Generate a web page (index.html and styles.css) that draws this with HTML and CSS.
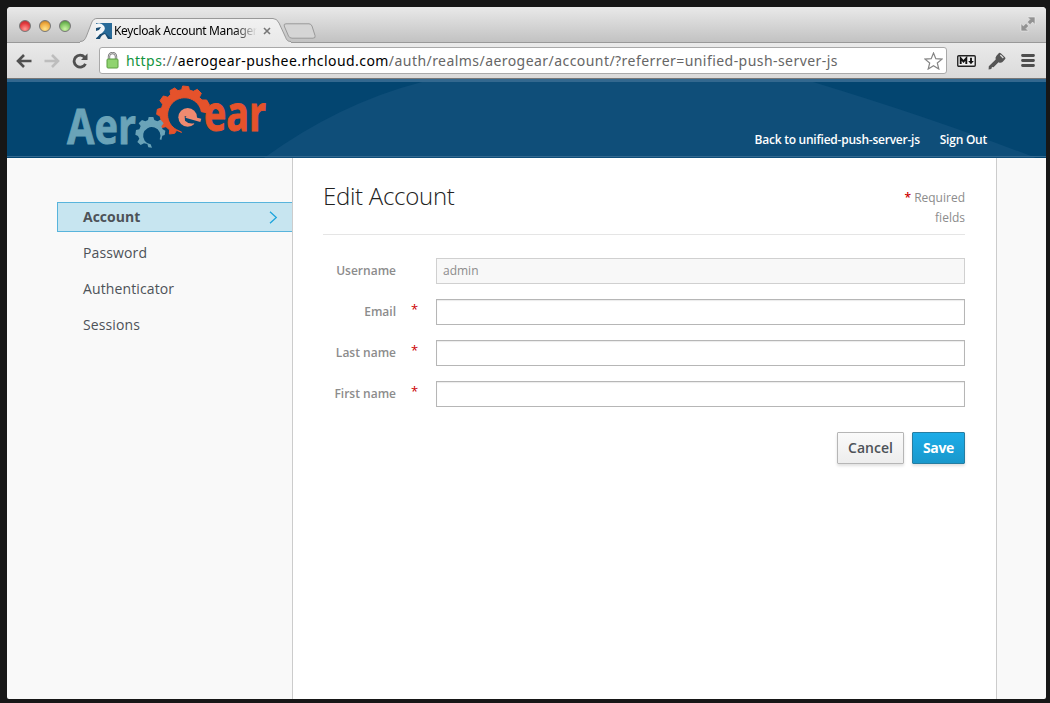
FILE: index.html
```
<!DOCTYPE html>
<html lang="en">
<head>
<meta charset="utf-8">
<title>Keycloak Account Management</title>
<link rel="stylesheet" href="styles.css">
</head>
<body>
<div class="window">
  <div class="tabbar">
    <div class="lights"><i class="light red"></i><i class="light amber"></i><i class="light green"></i></div>
    <div class="tab">
      <svg class="tab-shape" width="238" height="25" viewBox="0 0 238 25"><defs><linearGradient id="tg" x2="0" y2="1"><stop stop-color="#f1f1f1"/><stop offset="1" stop-color="#e9e9e9"/></linearGradient></defs><path d="M0 25V23.500C4 23.500 5 21.500 6.500 18L11.500 5Q13 .5 17 .5H193Q197 .5 199 5L205 18C206.500 21.500 207 23.500 211 23.500V25Z" fill="url(#tg)"/><path d="M0 23.500C4 23.500 5 21.500 6.500 18L11.500 5Q13 .5 17 .5H193Q197 .5 199 5L205 18C206.500 21.500 207 23.500 211 23.500" fill="none" stroke="#999"/></svg>
      <svg class="favicon" width="16" height="16" viewBox="0 0 16 16"><path d="M0 0H16V16H0Z" fill="#286a98"/><path d="M0 1Q5-1 8 3Q10 6 7 9L3 13L0 15Z" fill="#f4f7f9"/><path d="M0 5L5 4L3 7L0 8ZM0 16L4 11L9 10L16 16Z" fill="#1b4d73"/><path d="M4 16Q5 12 9 11L12 16Z" fill="#eee"/></svg>
      <span class="tab-title">Keycloak Account Manager</span>
      <svg class="close" width="8" height="8" viewBox="0 0 8 8"><path d="M1 1L7 7M7 1L1 7" stroke="#777" stroke-width="1.600"/></svg>
    </div>
    <svg class="newtab" width="34" height="17" viewBox="0 0 34 17"><path d="M3 .8H26Q28 .8 29 3L32 12.500Q33 15.200 30 15.200H9Q6.500 15.200 5.500 13L1.200 3Q.5.8 3 .8Z" fill="#d5d5d5" stroke="#999"/></svg>
    <svg class="expand" width="16" height="16" viewBox="0 0 16 16"><path d="M7.500 1H15V8.500L12.600 6.100L10 8.700L7.300 6L9.900 3.400ZM1 7.500L3.400 9.900L6 7.300L8.700 10L6.100 12.600L8.500 15H1Z" fill="#929292" stroke="#eee" stroke-width=".6"/></svg>
  </div>
  <div class="toolbar">
    <svg class="nav" width="16" height="14" viewBox="0 0 16 14"><path d="M15.500 7H2M8 1L2 7L8 13" fill="none" stroke="#505050" stroke-width="2.600"/></svg>
    <svg class="nav" width="16" height="14" viewBox="0 0 16 14"><path d="M.5 7H14M8 1L14 7L8 13" fill="none" stroke="#bdbdbd" stroke-width="2.600"/></svg>
    <svg class="reload" width="16" height="16" viewBox="0 0 16 16"><path d="M13.500 10.800A6 6 0 1 1 12.600 4.200" fill="none" stroke="#505050" stroke-width="2.800"/><path d="M15.500 .5V7H9Z" fill="#505050"/></svg>
    <div class="omnibox">
      <svg class="lock" width="13" height="17" viewBox="0 0 13 17"><path d="M3 8V4.500a3.500 3.500 0 0 1 7 0V8" fill="none" stroke="#777" stroke-width="2.400"/><path d="M3 8V4.500a3.500 3.500 0 0 1 7 0V8" fill="none" stroke="#ddd" stroke-width=".8"/><rect x="1" y="7" width="11" height="9" rx="1" fill="#8fd36f" stroke="#5a9e40"/></svg>
      <span class="url"><span class="scheme">https</span>://<span class="host">aerogear-pushee.rhcloud.com</span>/auth/realms/aerogear/account/?referrer=unified-push-server-js</span>
      <svg class="star" width="19" height="18" viewBox="0 0 19 18"><path d="M9.500 1L11.800 6.700L18 7.100L13.300 11L14.800 17L9.500 13.700L4.200 17L5.700 11L1 7.100L7.200 6.700Z" fill="#fff" stroke="#858585" stroke-width="1.200"/></svg>
    </div>
    <svg class="md" width="19" height="12" viewBox="0 0 19 12"><rect x=".75" y=".75" width="17.500" height="10.500" rx="1" fill="#eee" stroke="#222" stroke-width="1.400"/><path d="M3.700 9V3.300L6.500 6.500L9.300 3.300V9M14 2.800V7" fill="none" stroke="#111" stroke-width="1.900"/><path d="M11.200 6H16.800L14 9.300Z" fill="#111"/></svg>
    <svg class="key" width="18" height="18" viewBox="0 0 18 18"><path d="M10.500 1.500Q11.500 .3 12.800 1.200L17 5.200Q18 6.200 17 7.300L14.500 10Q12.800 11.500 10.500 10.300L5.500 15.300L4 15L3.300 17L.6 17.400L.8 14.300L7.700 7.500Q7 5.300 8.500 3.700Z" fill="#555"/><path d="M12.300 3L15.300 6" stroke="#ddd" stroke-width="1.200"/></svg>
    <svg class="menu" width="14" height="13" viewBox="0 0 14 13"><path d="M1.500 1.500H12.500M1.500 6.500H12.500M1.500 11.500H12.500" stroke="#4e4e4e" stroke-width="2.800" stroke-linecap="round"/></svg>
  </div>
  <header class="header">
    <svg class="swoosh" width="1039" height="79" viewBox="7 79 1039 79"><path d="M264 158Q340 103 422 82L445 79H802L813 82Q935 119 1036 158Z" fill="#0f4e79"/></svg>
    <svg class="logo" width="206" height="70" viewBox="64 82 206 70">
      <text class="wordmark" x="67" y="144" textLength="69" lengthAdjust="spacingAndGlyphs" fill="#6aa3b8" stroke="#6aa3b8">Aer</text>
      <text class="wordmark" x="204" y="130.500" textLength="62" lengthAdjust="spacingAndGlyphs" fill="#e5522b" stroke="#e5522b">ear</text>
      <g transform="translate(130 80) scale(.33333)">
        <path d="M155 157L140 151L134 160L118 162L119 150L108 140L92 143L85 128L93 118L90 108L80 103L82 88L95 84L98 73L90 62L100 48L114 52L122 43L120 32L134 24L144 32L155 29L158 18L176 20L178 30L190 34L202 28L214 40L208 52L216 60L230 60L238 74L230 98L214 95A51 51 0 1 0 146 152Z" fill="#e5522b" stroke="#e5522b" stroke-width="3" stroke-linejoin="round"/>
        <circle cx="173" cy="112" r="28" fill="#f08a70"/>
        <path d="M164 108L216 124L202 146L192 130Q176 133 165 122Z" fill="#034570"/>
        <path d="M172 106L214 116L211 126L166 113Z" fill="#f08a70"/>
        <path d="M66 203L55 202L52 192L42 190L32 195L22 186L28 176L24 168L16 164L18 150L28 148L32 138L26 130L36 120L46 124L54 120L56 111L70 111L73 120L82 124L92 119L101 130L94 139L98 148L106 152L104 165L97 167L94 180L89 178A26 26 0 1 0 62 193Z" fill="#6aa3b8"/>
      </g>
    </svg>
    <nav class="links"><a>Back to unified-push-server-js</a><a>Sign Out</a></nav>
  </header>
  <div class="body">
    <aside class="side">
      <a class="item active">Account<svg width="9" height="13" viewBox="0 0 9 13"><path d="M1 .7L7.300 6.500L1 12.300" fill="none" stroke="#1ca4dc" stroke-width="1.300"/></svg></a>
      <a class="item">Password</a><a class="item">Authenticator</a><a class="item">Sessions</a>
    </aside>
    <main class="main">
      <div class="heading"><h1>Edit Account</h1><p><b>*</b> Required<br>fields</p></div>
      <form>
        <div class="row"><label>Username</label><span class="req"></span><div class="field disabled">admin</div></div>
        <div class="row"><label>Email</label><span class="req">*</span><div class="field"></div></div>
        <div class="row"><label>Last name</label><span class="req">*</span><div class="field"></div></div>
        <div class="row"><label>First name</label><span class="req">*</span><div class="field"></div></div>
        <div class="actions"><button type="button" class="btn">Cancel</button><button type="button" class="btn primary">Save</button></div>
      </form>
    </main>
  </div>
</div>
</body>
</html>
```
FILE: styles.css
```
* { box-sizing: border-box; }
body { margin: 0; height: 703px; padding: 7px 4px 4px 7px; background: #171717; overflow: hidden; font-family: "Open Sans", sans-serif; }
.window { width: 1039px; height: 692px; border-radius: 4px 4px 2px 2px; overflow: hidden; background: #f9f9f9; display: flex; flex-direction: column; }
svg { flex: none; display: block; }
.tabbar { height: 36px; flex: none; background: linear-gradient(#e9e9e9, #c2c2c2); border-bottom: 1px solid #999; display: flex; position: relative; }
.lights { display: flex; gap: 8px; padding: 13px 0 0 12px; width: 73px; }
.light { width: 12px; height: 12px; border-radius: 50%; border: 1px solid #777; }
.red { background: radial-gradient(circle at 50% 80%, #ff9a94, #e3383d 60%, #a82b2f); }
.amber { background: radial-gradient(circle at 50% 80%, #ffe58c, #efa83d 60%, #a86d20); }
.green { background: radial-gradient(circle at 50% 80%, #ccf5a5, #79bf5c 60%, #40802f); }
.tab { width: 203px; margin-top: 11px; position: relative; display: flex; padding: 5px 0 0 16px; z-index: 1; height: 25px; }
.tab-shape { position: absolute; left: 0; top: 0; }
.favicon, .tab-title, .close { position: relative; }
.tab-title { font: 12px/16px "Noto Sans", sans-serif; letter-spacing: -.36px; white-space: nowrap; width: 143px; margin: 0 0 0 2px; color: #000; -webkit-mask-image: linear-gradient(90deg, #000 84%, transparent); mask-image: linear-gradient(90deg, #000 84%, transparent); }
.close { margin: 4px 0 0 6px; flex: none; }
.newtab { margin: 16px 0 0 0; }
.expand { margin: 9px 10px 0 auto; }
.toolbar { height: 36px; flex: none; background: linear-gradient(#eaeaea, #dadada); border-bottom: 1px solid #777; display: flex; align-items: center; padding-left: 9px; }
.nav { margin-right: 12px; }
.reload { margin-right: 11px; }
.omnibox { width: 848px; height: 27px; border: 1px solid #a9a9a9; border-radius: 3px; background: #fff; display: flex; align-items: center; padding: 0 3px 0 6px; flex: none; }
.url { font: 14px/20px "Noto Sans", sans-serif; letter-spacing: .444px; white-space: nowrap; color: #666; margin-left: 7px; }
.scheme { color: #12943d; }
.host { color: #000; }
.star { margin-left: auto; }
.md { margin-left: 10px; }
.key { margin-left: 12px; }
.menu { margin-left: 15px; }
.header { height: 79px; flex: none; background: #034570; position: relative; display: flex; justify-content: space-between; border-bottom: 1px solid #034570; }
.header::after { content: ""; position: absolute; inset: 0; border-top: 3px solid #33688f; border-bottom: 1px solid #33688f; }
.swoosh { position: absolute; left: 0; top: 0; }
.logo { position: relative; margin: 3px 0 0 57px; overflow: visible; }
.wordmark { font: 700 48px "Open Sans", sans-serif; stroke-width: .9px; }
.links { position: relative; display: flex; gap: 20px; padding: 52px 59px 0 0; color: #fff; font: 600 12px/17px "Open Sans", sans-serif; letter-spacing: -.24px; }
.body { flex: 1; display: flex; }
.side { width: 285px; padding: 44px 0 0 50px; display: flex; flex-direction: column; gap: 6px; }
.item { height: 30px; display: flex; align-items: center; justify-content: space-between; padding: 0 14px 2px 26px; font-size: 14px; letter-spacing: .12px; color: #4d5258; }
.active { background: #c7e5f0; border: 1px solid #58b4dc; border-right: 0; font-weight: 700; letter-spacing: 0; padding-left: 25px; }
.active svg { margin-top: 2px; }
.main { width: 705px; border: 1px solid #ccc; border-width: 0 1px; background: #fff; padding: 23px 31px 0 30px; }
.heading { height: 54px; border-bottom: 1px solid #e5e5e5; display: flex; justify-content: space-between; }
h1 { margin: 0; font: 300 24px/29px "Open Sans", sans-serif; letter-spacing: -.28px; color: #222; }
.heading p { margin: 7px 0 0; text-align: right; font-size: 12px; line-height: 20px; color: #8c8c8c; }
.heading b, .req { color: #c00; }
.heading b { font-weight: 600; }
form { padding-top: 23px; }
.row { display: flex; height: 26px; margin-bottom: 15px; line-height: 26px; }
label { width: 73px; text-align: right; font-size: 12px; font-weight: 600; color: #8c8c8c; }
.req { width: 40px; padding-left: 15px; font-size: 13px; line-height: 20px; }
.field { flex: 1; border: 1px solid #b6b6b6; box-shadow: inset 0 1px 1px rgba(0,0,0,.08); }
.disabled { background: #f8f8f8; border-color: #d0d0d0; box-shadow: none; color: #8c8c8c; font-size: 12px; line-height: 24px; padding-left: 6px; }
.actions { display: flex; justify-content: flex-end; gap: 8px; padding-top: 10px; }
.btn { height: 32px; width: 67px; padding: 0 0 2px; font: 600 14px "Open Sans", sans-serif; color: #4d5258; border: 1px solid #b6b6b6; border-radius: 1px; background: linear-gradient(#fafafa, #ededed); box-shadow: 0 2px 3px rgba(0,0,0,.12); }
.primary { width: 53px; color: #fff; font-weight: 700; letter-spacing: -.3px; border-color: #267da1; background: linear-gradient(#1cace8, #1998cc); }
```
